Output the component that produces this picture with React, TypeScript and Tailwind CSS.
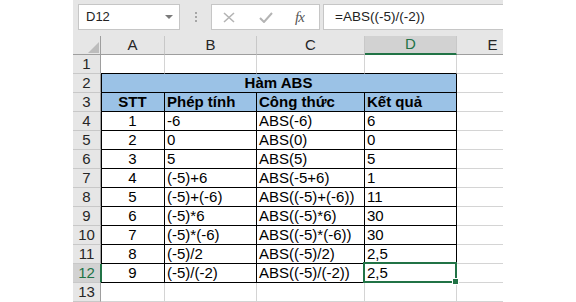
import React from 'react'

const FONT = { fontFamily: '"Liberation Sans", Arial, sans-serif' }

// widths: row header, A, B, C, D, E
const W_HEAD = 'w-[28px]'
const W_COLS = ['w-[64px]', 'w-[92px]', 'w-[108px]', 'w-[92px]', 'w-[72px]']

const rows = [
  ['1', '-6', 'ABS(-6)', '6'],
  ['2', '0', 'ABS(0)', '0'],
  ['3', '5', 'ABS(5)', '5'],
  ['4', '(-5)+6', 'ABS(-5+6)', '1'],
  ['5', '(-5)+(-6)', 'ABS((-5)+(-6))', '11'],
  ['6', '(-5)*6', 'ABS((-5)*6)', '30'],
  ['7', '(-5)*(-6)', 'ABS((-5)*(-6))', '30'],
  ['8', '(-5)/2', 'ABS((-5)/2)', '2,5'],
  ['9', '(-5)/(-2)', 'ABS((-5)/(-2))', '2,5'],
]

const CELL = 'shrink-0 border-r border-b flex items-end whitespace-nowrap text-[15px] leading-[18px] px-[2px] text-black'
const GRID = 'border-[#d4d4d4]'

function RowHead({ n, selected }: { n: number; selected?: boolean }) {
  return (
    <div
      className={`${W_HEAD} shrink-0 border-b border-b-[#c8c8c8] flex items-end justify-center text-[15px] leading-[18px] ${
        selected
          ? 'bg-[#d2d2d2] text-[#217346] border-r border-r-[#217346]'
          : 'bg-[#e6e6e6] text-[#262626] border-r border-r-[#9e9e9e]'
      }`}
    >
      {n}
    </div>
  )
}

function FormulaBar() {
  return (
    <div className="h-[40px] bg-[#e6e6e6] flex items-start pt-[4px]">
      <div className="ml-[5px] w-[102px] h-[26px] bg-white border border-[#c6c6c6] flex items-center justify-between pl-[7px] pr-[6px]">
        <span className="text-[13px] text-[#222]">D12</span>
        <svg width="8" height="4" viewBox="0 0 8 4">
          <polygon points="0,0 8,0 4,4" fill="#7a7a7a" />
        </svg>
      </div>
      <div className="w-[31px] h-[26px] flex flex-col items-center justify-center gap-[2px]">
        <span className="w-[2px] h-[2px] bg-[#a6a6a6]" />
        <span className="w-[2px] h-[2px] bg-[#a6a6a6]" />
        <span className="w-[2px] h-[2px] bg-[#a6a6a6]" />
      </div>
      <div className="w-[109px] h-[26px] bg-white border border-[#c6c6c6] flex items-center">
        <svg className="ml-[11px]" width="12" height="11" viewBox="0 0 12 11">
          <path d="M1 1 L11 10 M11 1 L1 10" stroke="#b4b4b4" strokeWidth="1.6" fill="none" />
        </svg>
        <svg className="ml-[24px]" width="14" height="11" viewBox="0 0 14 11">
          <path d="M1 6 L5 10 L13 1" stroke="#b4b4b4" strokeWidth="2" fill="none" />
        </svg>
        <span
          className="ml-[22px] text-[15px] italic text-[#555] tracking-[-1px]"
          style={{ fontFamily: '"Liberation Serif", "Times New Roman", serif' }}
        >
          fx
        </span>
      </div>
      <div className="ml-[3px] flex-1 h-[26px] bg-white border border-r-0 border-[#c6c6c6] flex items-center pl-[11px]">
        <span className="text-[13.5px] text-[#222]">=ABS((-5)/(-2))</span>
      </div>
    </div>
  )
}

function HeaderRow() {
  const letters = ['A', 'B', 'C', 'D', 'E']
  return (
    <div className="flex h-[19px]">
      <div className={`${W_HEAD} shrink-0 bg-[#e6e6e6] border-r border-b border-r-[#9e9e9e] border-b-[#9e9e9e] flex items-end justify-end pr-[1px] pb-[1px]`}>
        <svg width="11" height="11" viewBox="0 0 11 11">
          <polygon points="11,0 11,11 0,11" fill="#bcbcbc" />
        </svg>
      </div>
      {letters.map((l, i) => (
        <div
          key={l}
          className={`${W_COLS[i]} shrink-0 border-r border-r-[#c8c8c8] flex items-end justify-center text-[15px] leading-[18px] ${
            l === 'D'
              ? 'bg-[#d2d2d2] text-[#217346] border-b-2 border-b-[#217346]'
              : 'bg-[#e6e6e6] text-[#262626] border-b border-b-[#9e9e9e]'
          }`}
        >
          {l}
        </div>
      ))}
    </div>
  )
}

export default function App() {
  return (
    <div className="w-[576px] h-[302px] bg-white flex overflow-hidden" style={FONT}>
      <div className="w-[73px] shrink-0" />
      <div className="w-[430px] shrink-0 h-[302px] overflow-hidden flex flex-col">
        <FormulaBar />
        <HeaderRow />

        {/* row 1 */}
        <div className="flex h-[19px]">
          <RowHead n={1} />
          <div className={`${CELL} ${W_COLS[0]} border-r-[#d4d4d4] border-b-black`} />
          <div className={`${CELL} ${W_COLS[1]} border-r-[#d4d4d4] border-b-black`} />
          <div className={`${CELL} ${W_COLS[2]} border-r-[#d4d4d4] border-b-black`} />
          <div className={`${CELL} ${W_COLS[3]} border-r-[#d4d4d4] border-b-black`} />
          <div className={`${CELL} ${W_COLS[4]} ${GRID}`} />
        </div>

        {/* row 2: merged title */}
        <div className="flex h-[19px]">
          <RowHead n={2} />
          <div className={`${CELL} w-[356px] border-black bg-[#9bc2e6] justify-center font-bold shadow-[inset_1px_0_0_#000]`}>
            Hàm ABS
          </div>
          <div className={`${CELL} ${W_COLS[4]} ${GRID}`} />
        </div>

        {/* row 3: headings */}
        <div className="flex h-[19px]">
          <RowHead n={3} />
          <div className={`${CELL} ${W_COLS[0]} border-black bg-[#9bc2e6] justify-center font-bold shadow-[inset_1px_0_0_#000]`}>STT</div>
          <div className={`${CELL} ${W_COLS[1]} border-black bg-[#9bc2e6] font-bold`}>Phép tính</div>
          <div className={`${CELL} ${W_COLS[2]} border-black bg-[#9bc2e6] font-bold`}>Công thức</div>
          <div className={`${CELL} ${W_COLS[3]} border-black bg-[#9bc2e6] font-bold`}>Kết quả</div>
          <div className={`${CELL} ${W_COLS[4]} ${GRID}`} />
        </div>

        {rows.map((r, i) => {
          const n = i + 4
          const sel = n === 12
          return (
            <div key={n} className={`flex ${n === 4 || n === 10 ? 'h-[20px]' : 'h-[19px]'}`}>
              <RowHead n={n} selected={sel} />
              <div
                className={`${CELL} ${W_COLS[0]} border-black justify-center ${
                  sel ? 'shadow-[inset_1px_0_0_#217346]' : 'shadow-[inset_1px_0_0_#000]'
                }`}
              >
                {r[0]}
              </div>
              <div className={`${CELL} ${W_COLS[1]} border-black`}>{r[1]}</div>
              <div className={`${CELL} ${W_COLS[2]} border-black`}>{r[2]}</div>
              <div className={`${CELL} ${W_COLS[3]} border-black relative`}>
                {r[3]}
                {sel && (
                  <>
                    <div className="absolute -left-[2px] -top-[2px] -right-[1px] -bottom-[1px] border-2 border-[#217346]" />
                    <div className="absolute -right-[3px] -bottom-[3px] w-[7px] h-[7px] bg-[#217346] border border-white" />
                  </>
                )}
              </div>
              <div className={`${CELL} ${W_COLS[4]} ${GRID}`} />
            </div>
          )
        })}

        {/* row 13 (partly visible) */}
        <div className="flex h-[19px]">
          <RowHead n={13} />
          <div className={`${CELL} ${W_COLS[0]} ${GRID}`} />
          <div className={`${CELL} ${W_COLS[1]} ${GRID}`} />
          <div className={`${CELL} ${W_COLS[2]} ${GRID}`} />
          <div className={`${CELL} ${W_COLS[3]} ${GRID}`} />
          <div className={`${CELL} ${W_COLS[4]} ${GRID}`} />
        </div>
      </div>
    </div>
  )
}
